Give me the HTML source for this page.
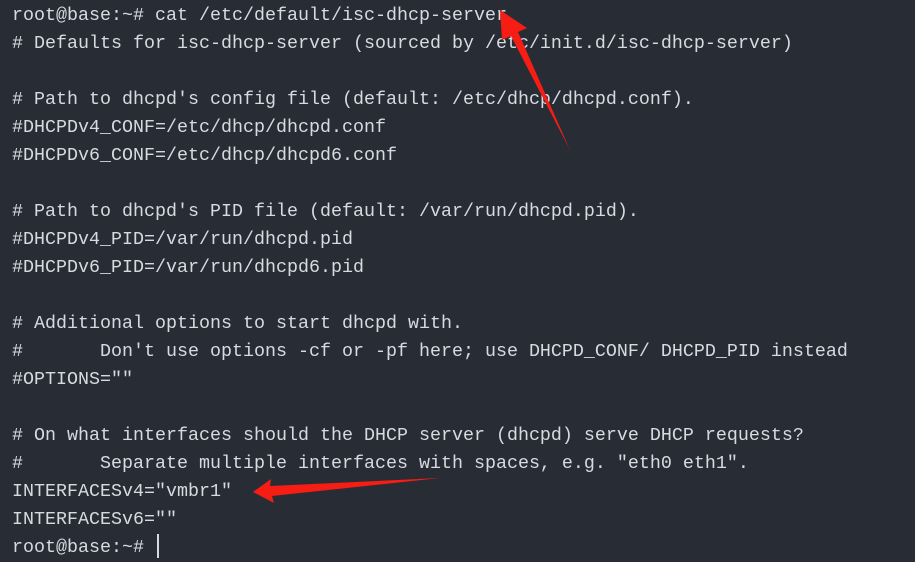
<!DOCTYPE html>
<html><head><style>
html,body{margin:0;padding:0;background:#282c34;width:915px;height:561px;overflow:hidden}
pre{margin:0;position:absolute;left:12px;top:2px;font-family:"Liberation Mono",monospace;font-size:18.33px;line-height:28px;color:#d7dae0;white-space:pre}
.cur{display:inline-block;width:2px;height:24px;background:#d7dae0;vertical-align:-6px;margin-left:2px}
svg{position:absolute;left:0;top:0}
</style></head><body>
<pre>root@base:~# cat /etc/default/isc-dhcp-server
# Defaults for isc-dhcp-server (sourced by /etc/init.d/isc-dhcp-server)

# Path to dhcpd's config file (default: /etc/dhcp/dhcpd.conf).
#DHCPDv4_CONF=/etc/dhcp/dhcpd.conf
#DHCPDv6_CONF=/etc/dhcp/dhcpd6.conf

# Path to dhcpd's PID file (default: /var/run/dhcpd.pid).
#DHCPDv4_PID=/var/run/dhcpd.pid
#DHCPDv6_PID=/var/run/dhcpd6.pid

# Additional options to start dhcpd with.
#       Don't use options -cf or -pf here; use DHCPD_CONF/ DHCPD_PID instead
#OPTIONS=""

# On what interfaces should the DHCP server (dhcpd) serve DHCP requests?
#       Separate multiple interfaces with spaces, e.g. "eth0 eth1".
INTERFACESv4="vmbr1"
INTERFACESv6=""
root@base:~# <span class="cur"></span></pre>
<svg width="915" height="561">
<polygon fill="#f51d14" points="500,10 527,28 518,32 570,150 511,36 502,40"/>
<polygon fill="#f51d14" points="253,492 271,479 270,486 440,478 272,496 274,503"/>
</svg>
</body></html>
